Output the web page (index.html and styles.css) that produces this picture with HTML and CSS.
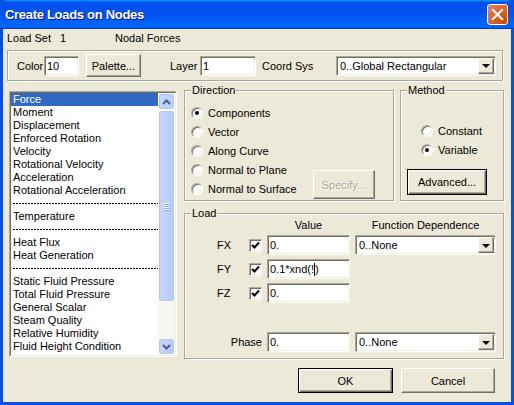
FILE: index.html
```html
<!DOCTYPE html>
<html lang="en">
<head>
    <meta charset="UTF-8">
    <title>Create Loads on Nodes</title>
    <link rel="stylesheet" href="styles.css">
</head>
<body>
<div class="window">
    <div class="titlebar">
        <span class="title">Create Loads on Nodes</span>
        <span class="close">
            <svg width="13" height="13" viewBox="0 0 13 13"><path d="M2 2 L11 11 M11 2 L2 11" stroke="#fff" stroke-width="2.2" stroke-linecap="square"/></svg>
        </span>
    </div>
    <div class="dlg">
        <div class="info">
            <span class="info-key">Load Set</span>
            <span class="info-num">1</span>
            <span>Nodal Forces</span>
        </div>

        <div class="topbox">
            <span class="lbl lbl-color">Color</span>
            <span class="field f-color">10</span>
            <span class="btn btn-palette">Palette...</span>
            <span class="lbl lbl-layer">Layer</span>
            <span class="field f-layer">1</span>
            <span class="lbl lbl-csys">Coord Sys</span>
            <span class="combo c-csys"><span class="combo-text">0..Global Rectangular</span><span class="drop"><i class="tri"></i></span></span>
        </div>

        <div class="main">
            <div class="listbox">
                <div class="listin">
                    <div class="items">
                        <div class="item sel">Force</div>
                        <div class="item">Moment</div>
                        <div class="item">Displacement</div>
                        <div class="item">Enforced Rotation</div>
                        <div class="item">Velocity</div>
                        <div class="item">Rotational Velocity</div>
                        <div class="item">Acceleration</div>
                        <div class="item">Rotational Acceleration</div>
                        <div class="item sep"></div>
                        <div class="item">Temperature</div>
                        <div class="item sep"></div>
                        <div class="item">Heat Flux</div>
                        <div class="item">Heat Generation</div>
                        <div class="item sep"></div>
                        <div class="item">Static Fluid Pressure</div>
                        <div class="item">Total Fluid Pressure</div>
                        <div class="item">General Scalar</div>
                        <div class="item">Steam Quality</div>
                        <div class="item">Relative Humidity</div>
                        <div class="item">Fluid Height Condition</div>
                        <div class="item">Unknown Condition</div>
                    </div>
                    <div class="sb">
                        <div class="sb-btn">
                            <svg width="9" height="6" viewBox="0 0 9 6"><path d="M1 5 L4.5 1.5 L8 5" fill="none" stroke="#4d6185" stroke-width="2"/></svg>
                        </div>
                        <div class="sb-thumb">
                            <span class="grip"></span><span class="grip"></span><span class="grip"></span><span class="grip"></span>
                        </div>
                        <div class="sb-track"></div>
                        <div class="sb-btn">
                            <svg width="9" height="6" viewBox="0 0 9 6"><path d="M1 1 L4.5 4.5 L8 1" fill="none" stroke="#4d6185" stroke-width="2"/></svg>
                        </div>
                    </div>
                </div>
            </div>

            <div class="right">
                <div class="top-groups">
                    <div class="group g-dir">
                        <span class="legend">Direction</span>
                        <div class="radios">
                            <div class="radio-row"><span class="radio on"></span>Components</div>
                            <div class="radio-row"><span class="radio"></span>Vector</div>
                            <div class="radio-row"><span class="radio"></span>Along Curve</div>
                            <div class="radio-row"><span class="radio"></span>Normal to Plane</div>
                            <div class="radio-row"><span class="radio"></span>Normal to Surface</div>
                        </div>
                        <span class="btn btn-specify disabled">Specify...</span>
                    </div>
                    <div class="group g-method">
                        <span class="legend">Method</span>
                        <div class="radio-row ind"><span class="radio"></span>Constant</div>
                        <div class="radio-row ind"><span class="radio on"></span>Variable</div>
                        <span class="btn default btn-adv">Advanced...</span>
                    </div>
                </div>

                <div class="group g-load">
                    <span class="legend">Load</span>
                    <div class="load-grid">
                        <span class="hdr hdr-value">Value</span>
                        <span class="hdr hdr-func">Function Dependence</span>

                        <span class="comp">FX</span>
                        <span class="check"><svg width="9" height="9" viewBox="0 0 9 9"><path d="M1 4 L3.5 6.5 L8 1.5" fill="none" stroke="#000" stroke-width="2"/></svg></span>
                        <span class="field">0.</span>
                        <span class="combo"><span class="combo-text">0..None</span><span class="drop"><i class="tri"></i></span></span>

                        <span class="comp">FY</span>
                        <span class="check"><svg width="9" height="9" viewBox="0 0 9 9"><path d="M1 4 L3.5 6.5 L8 1.5" fill="none" stroke="#000" stroke-width="2"/></svg></span>
                        <span class="field">0.1*xnd(!<i class="caret"></i>)</span>
                        <span></span>

                        <span class="comp">FZ</span>
                        <span class="check"><svg width="9" height="9" viewBox="0 0 9 9"><path d="M1 4 L3.5 6.5 L8 1.5" fill="none" stroke="#000" stroke-width="2"/></svg></span>
                        <span class="field">0.</span>
                        <span></span>

                        <span class="spacer"></span>

                        <span class="phase-lbl">Phase</span>
                        <span class="field">0.</span>
                        <span class="combo"><span class="combo-text">0..None</span><span class="drop"><i class="tri"></i></span></span>
                    </div>
                </div>
            </div>
        </div>

        <div class="buttons">
            <span class="btn default btn-ok">OK</span>
            <span class="btn btn-cancel">Cancel</span>
        </div>
    </div>
</div>
</body>
</html>
```

FILE: styles.css
```css
body {
    margin: 0;
    font-family: "Liberation Sans", Arial, sans-serif;
    font-size: 11px;
    color: #000;
}
.window {
    width: 514px;
    height: 405px;
    box-sizing: border-box;
    padding: 0 3px 3px 3px;
    background: #0a4fe0;
    display: flex;
    flex-direction: column;
}
.titlebar {
    height: 29px;
    margin: 0 -3px;
    display: flex;
    align-items: center;
    justify-content: space-between;
    padding: 0 6px 0 5px;
    background: linear-gradient(180deg, #0997ff, #0053ee 8%, #0050ee 40%, #0066ff 88%, #0066ff 93%, #005bff 95%, #003dd7 96%, #003dd7);
    border-radius: 7px 7px 0 0;
}
.title {
    color: #fff;
    font-weight: bold;
    font-size: 13px;
    letter-spacing: -0.3px;
    text-shadow: 1px 1px #0f1089;
}
.close {
    width: 21px;
    height: 21px;
    box-sizing: border-box;
    border: 1px solid #fff;
    border-radius: 3px;
    background: radial-gradient(circle at 90% 90%, #cc4600 0, #dc6527 55%, #e5836a 100%);
    display: flex;
    align-items: center;
    justify-content: center;
}
.dlg {
    flex: 1;
    background: #ece9d8;
}

/* ligne info */
.info {
    display: flex;
    padding: 3px 0 0 4px;
    height: 13px;
    line-height: 13px;
}
.info-key { width: 53px; }
.info-num { width: 55px; }

/* boite du haut */
.topbox {
    margin: 5px 0 0 4px;
    width: 496px;
    height: 31px;
    box-sizing: border-box;
    border: 1px solid #aca899;
    box-shadow: inset 1px 1px #fff, 1px 1px #fff;
    display: flex;
    align-items: center;
    padding-left: 9px;
}
.lbl-color { width: 27px; }
.f-color { width: 35px; }
.btn-palette { margin-left: 7px; width: 55px; height: 23px; }
.lbl-layer { margin-left: 29px; width: 30px; }
.f-layer { width: 56px; }
.lbl-csys { margin-left: 6px; width: 74px; }
.c-csys { width: 160px; }

/* controles */
.field {
    display: flex;
    align-items: center;
    height: 20px;
    box-sizing: border-box;
    padding-left: 2px;
    background: #fff;
    border: 1px solid;
    border-color: #aca899 #fff #fff #aca899;
    box-shadow: inset 1px 1px #716f64, inset -1px -1px #f1efe2;
    white-space: nowrap;
}
.caret {
    display: inline-block;
    width: 1px;
    height: 13px;
    background: #000;
}
.combo {
    display: flex;
    align-items: center;
    height: 20px;
    box-sizing: border-box;
    background: #fff;
    border: 1px solid;
    border-color: #aca899 #fff #fff #aca899;
    box-shadow: inset 1px 1px #716f64, inset -1px -1px #f1efe2;
    padding: 1px;
}
.combo-text {
    flex: 1;
    padding-left: 2px;
}
.drop {
    width: 16px;
    height: 16px;
    box-sizing: border-box;
    background: #ece9d8;
    border: 1px solid;
    border-color: #fff #716f64 #716f64 #fff;
    box-shadow: inset -1px -1px #aca899;
    display: flex;
    align-items: center;
    justify-content: center;
}
.tri {
    width: 0;
    height: 0;
    border-left: 4px solid transparent;
    border-right: 4px solid transparent;
    border-top: 4px solid #000;
    margin-top: 1px;
}
.btn {
    display: flex;
    align-items: center;
    justify-content: center;
    box-sizing: border-box;
    background: #ece9d8;
    border: 1px solid;
    border-color: #fff #716f64 #716f64 #fff;
    box-shadow: inset -1px -1px #aca899;
}
.btn.default {
    border-color: #000;
    box-shadow: inset 1px 1px #fff, inset -1px -1px #716f64, inset -2px -2px #aca899;
}
.btn.disabled {
    color: #aca899;
    text-shadow: 1px 1px #fff;
}

/* zone principale */
.main {
    display: flex;
    margin-top: 9px;
}
.listbox {
    margin: 1px 0 0 6px;
    width: 168px;
    height: 266px;
    box-sizing: border-box;
    border: 1px solid;
    border-color: #aca899 #fff #fff #aca899;
}
.listin {
    height: 100%;
    box-sizing: border-box;
    border: 1px solid;
    border-color: #716f64 #f1efe2 #f1efe2 #716f64;
    background: #fff;
    display: flex;
}
.items {
    flex: 1;
    overflow: hidden;
}
.item {
    height: 13px;
    line-height: 13px;
    padding-left: 2px;
    white-space: nowrap;
    overflow: hidden;
}
.item.sel {
    background: #316ac5;
    color: #fff;
}
/* separateur pointille */
.item.sep {
    display: flex;
    align-items: center;
}
.item.sep::before {
    content: "";
    flex: 1;
    height: 1px;
    background: repeating-linear-gradient(90deg, #000 0 2px, transparent 2px 3px);
}
.sb {
    width: 17px;
    display: flex;
    flex-direction: column;
    background: #f7f6f1;
}
.sb-btn, .sb-thumb {
    box-sizing: border-box;
    border: 1px solid #fff;
    border-radius: 3px;
    background: linear-gradient(90deg, #c7d6fc, #b7cbfa);
    box-shadow: inset 0 0 0 1px #b2c6f5;
}
.sb-btn {
    height: 17px;
    display: flex;
    align-items: center;
    justify-content: center;
}
.sb-thumb {
    height: 192px;
    display: flex;
    flex-direction: column;
    align-items: center;
    justify-content: center;
    gap: 1px;
}
.grip {
    width: 7px;
    height: 1px;
    background: #eef4fe;
    box-shadow: 1px 1px #8cb0f8;
}
.sb-track { flex: 1; }

.right {
    margin-left: 7px;
    width: 320px;
}
.top-groups {
    display: flex;
    gap: 6px;
}
.group {
    position: relative;
    box-sizing: border-box;
    border: 1px solid #aca899;
    box-shadow: inset 1px 1px #fff, 1px 1px #fff;
}
.legend {
    position: absolute;
    top: -7px;
    left: 6px;
    padding: 0 1px;
    line-height: 13px;
    background: #ece9d8;
}
.g-dir {
    width: 210px;
    height: 111px;
    display: flex;
    padding: 12px 0 0 6px;
}
.radios { flex: 1; }
.radio-row {
    display: flex;
    align-items: center;
    gap: 5px;
    height: 19px;
}
.radio {
    width: 12px;
    height: 12px;
    box-sizing: border-box;
    border-radius: 50%;
    border: 1px solid;
    border-color: #aca899 #fff #fff #aca899;
    box-shadow: inset 1px 1px #716f64, inset -1px -1px #f1efe2;
    background: #fff;
    display: flex;
    align-items: center;
    justify-content: center;
}
.radio.on::after {
    content: "";
    width: 4px;
    height: 4px;
    border-radius: 50%;
    background: #000;
}
.btn-specify {
    align-self: flex-end;
    width: 62px;
    height: 29px;
    margin: 0 18px 1px 0;
}
.g-method {
    width: 104px;
    height: 111px;
    display: flex;
    flex-direction: column;
    padding: 30px 0 0 6px;
}
.radio-row.ind { margin-left: 14px; }
.btn-adv {
    margin-top: 10px;
    width: 80px;
    height: 26px;
}

.g-load {
    margin-top: 12px;
    height: 146px;
}
.load-grid {
    display: grid;
    grid-template-columns: 59px 13px 83px 141px;
    grid-template-rows: 12px 20px 20px 20px 21px 20px;
    column-gap: 5px;
    row-gap: 4px;
    padding-top: 5px;
    align-items: center;
}
.hdr { line-height: 12px; text-align: center; }
.hdr-value { grid-column: 3; }
.hdr-func { grid-column: 4; }
.comp { padding-left: 32px; }
.check {
    width: 13px;
    height: 13px;
    box-sizing: border-box;
    background: #fff;
    border: 1px solid;
    border-color: #aca899 #fff #fff #aca899;
    box-shadow: inset 1px 1px #716f64, inset -1px -1px #f1efe2;
    display: flex;
    align-items: center;
    justify-content: center;
}
.spacer { grid-column: 1 / 5; }
.phase-lbl {
    grid-column: 1 / 3;
    justify-self: end;
}

.buttons {
    display: flex;
    justify-content: flex-end;
    gap: 8px;
    margin-top: 9px;
    padding-right: 16px;
}
.btn-ok { width: 95px; height: 25px; }
.btn-cancel { width: 94px; height: 25px; }
```
